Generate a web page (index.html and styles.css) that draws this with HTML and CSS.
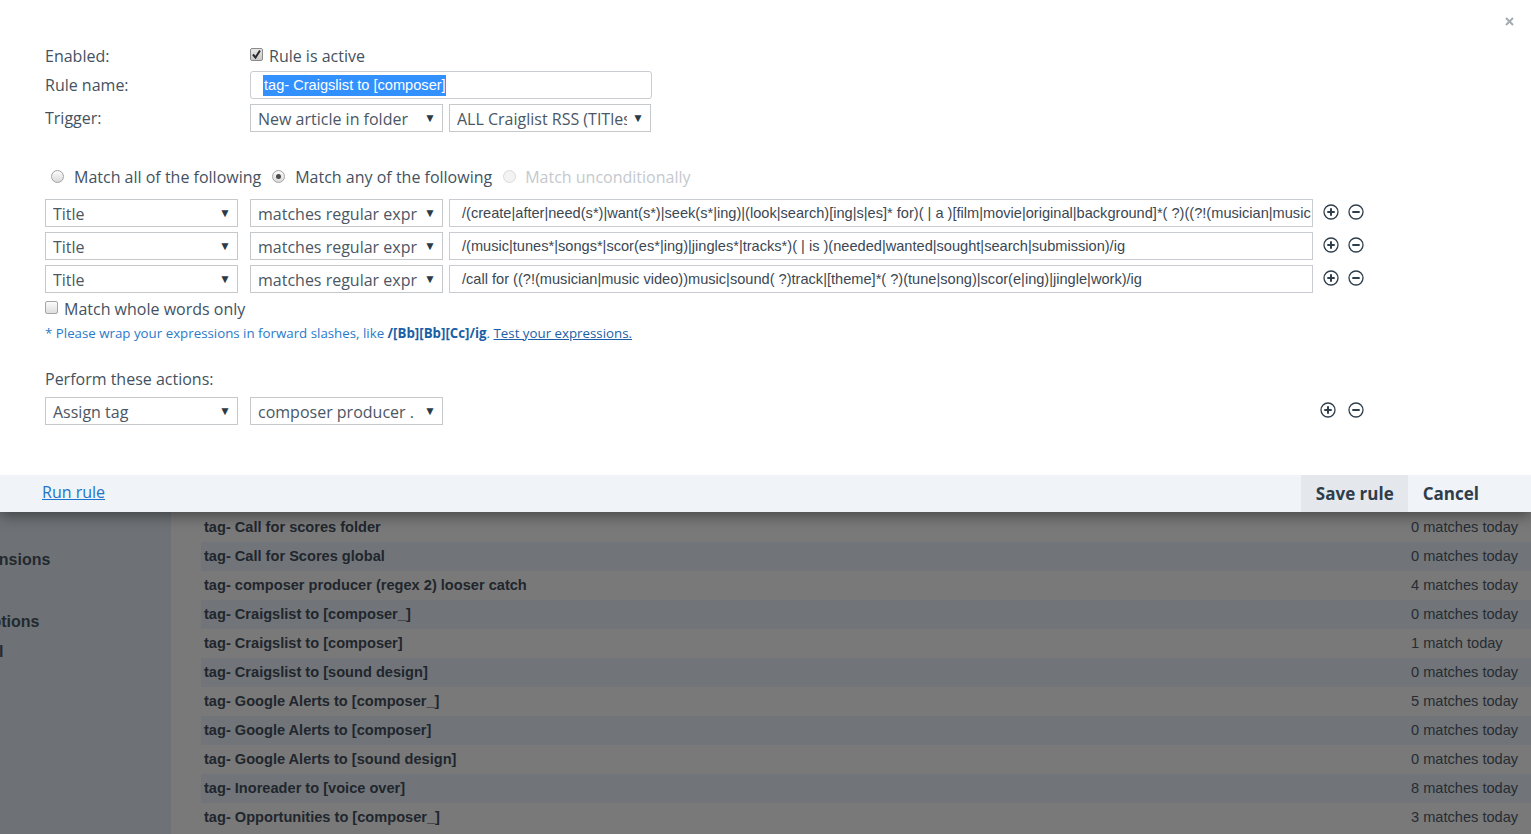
FILE: index.html
```html
<!DOCTYPE html>
<html>
<head>
  <meta charset="utf-8">
  <title>Rules</title>
  <link rel="stylesheet" href="styles.css">
</head>
<body>
  <div class="page">
    <aside class="sidebar">
      <div class="nav nav-ext">Extensions</div>
      <div class="nav nav-opt">Options</div>
      <div class="nav nav-tut">Tutorial</div>
    </aside>
    <main class="rules">
      <div class="rule"><span class="rule-name">tag- Call for scores folder</span><span class="rule-count">0 matches today</span></div>
      <div class="rule"><span class="rule-name">tag- Call for Scores global</span><span class="rule-count">0 matches today</span></div>
      <div class="rule"><span class="rule-name">tag- composer producer (regex 2) looser catch</span><span class="rule-count">4 matches today</span></div>
      <div class="rule"><span class="rule-name">tag- Craigslist to [composer_]</span><span class="rule-count">0 matches today</span></div>
      <div class="rule"><span class="rule-name">tag- Craigslist to [composer]</span><span class="rule-count">1 match today</span></div>
      <div class="rule"><span class="rule-name">tag- Craigslist to [sound design]</span><span class="rule-count">0 matches today</span></div>
      <div class="rule"><span class="rule-name">tag- Google Alerts to [composer_]</span><span class="rule-count">5 matches today</span></div>
      <div class="rule"><span class="rule-name">tag- Google Alerts to [composer]</span><span class="rule-count">0 matches today</span></div>
      <div class="rule"><span class="rule-name">tag- Google Alerts to [sound design]</span><span class="rule-count">0 matches today</span></div>
      <div class="rule"><span class="rule-name">tag- Inoreader to [voice over]</span><span class="rule-count">8 matches today</span></div>
      <div class="rule"><span class="rule-name">tag- Opportunities to [composer_]</span><span class="rule-count">3 matches today</span></div>
    </main>
  </div>

  <div class="modal">
    <span class="close">
      <svg width="9" height="9" viewBox="0 0 9 9"><path d="M1 1L8 8M8 1L1 8" stroke="#a3aab1" stroke-width="2"/></svg>
    </span>
    <div class="modal-body">
      <div class="field-row row-enabled">
        <div class="field-label">Enabled:</div>
        <label class="check-opt"><span class="checkbox checked"><svg width="11" height="11" viewBox="0 0 11 11"><path d="M2 5.5L4.5 8.5L9 1.5" fill="none" stroke="#2b2b2b" stroke-width="2"/></svg></span>Rule is active</label>
      </div>
      <div class="field-row row-name">
        <div class="field-label">Rule name:</div>
        <div class="text-input name-input"><span class="selected">tag- Craigslist to [composer]</span></div>
      </div>
      <div class="field-row">
        <div class="field-label">Trigger:</div>
        <div class="select w193"><span class="select-text">New article in folder</span><span class="arrow">▼</span></div>
        <div class="select w202 ml6"><span class="select-text">ALL Craiglist RSS (TITles only)</span><span class="arrow">▼</span></div>
      </div>

      <div class="match-mode">
        <label class="radio-opt first"><span class="radio"></span>Match all of the following</label>
        <label class="radio-opt"><span class="radio checked"></span>Match any of the following</label>
        <label class="radio-opt disabled"><span class="radio"></span>Match unconditionally</label>
      </div>

      <div class="conditions">
        <div class="cond-row">
          <div class="select w193"><span class="select-text">Title</span><span class="arrow">▼</span></div>
          <div class="select w193 ml12"><span class="select-text">matches regular expr</span><span class="arrow">▼</span></div>
          <div class="text-input regex-input">/(create|after|need(s*)|want(s*)|seek(s*|ing)|(look|search)[ing|s|es]* for)( | a )[film|movie|original|background]*( ?)((?!(musician|music video))music|sound( ?)track|score|composer)/ig</div>
          <span class="icons">
            <svg class="icon" width="16" height="16" viewBox="0 0 16 16"><circle cx="8" cy="8" r="7" fill="none" stroke="#2f3e4c" stroke-width="1.3"/><path d="M8 4.3V11.7M4.3 8H11.7" stroke="#2f3e4c" stroke-width="2"/></svg>
            <svg class="icon" width="16" height="16" viewBox="0 0 16 16"><circle cx="8" cy="8" r="7" fill="none" stroke="#2f3e4c" stroke-width="1.3"/><path d="M4.3 8H11.7" stroke="#2f3e4c" stroke-width="2"/></svg>
          </span>
        </div>
        <div class="cond-row">
          <div class="select w193"><span class="select-text">Title</span><span class="arrow">▼</span></div>
          <div class="select w193 ml12"><span class="select-text">matches regular expr</span><span class="arrow">▼</span></div>
          <div class="text-input regex-input">/(music|tunes*|songs*|scor(es*|ing)|jingles*|tracks*)( | is )(needed|wanted|sought|search|submission)/ig</div>
          <span class="icons">
            <svg class="icon" width="16" height="16" viewBox="0 0 16 16"><circle cx="8" cy="8" r="7" fill="none" stroke="#2f3e4c" stroke-width="1.3"/><path d="M8 4.3V11.7M4.3 8H11.7" stroke="#2f3e4c" stroke-width="2"/></svg>
            <svg class="icon" width="16" height="16" viewBox="0 0 16 16"><circle cx="8" cy="8" r="7" fill="none" stroke="#2f3e4c" stroke-width="1.3"/><path d="M4.3 8H11.7" stroke="#2f3e4c" stroke-width="2"/></svg>
          </span>
        </div>
        <div class="cond-row">
          <div class="select w193"><span class="select-text">Title</span><span class="arrow">▼</span></div>
          <div class="select w193 ml12"><span class="select-text">matches regular expr</span><span class="arrow">▼</span></div>
          <div class="text-input regex-input">/call for ((?!(musician|music video))music|sound( ?)track|[theme]*( ?)(tune|song)|scor(e|ing)|jingle|work)/ig</div>
          <span class="icons">
            <svg class="icon" width="16" height="16" viewBox="0 0 16 16"><circle cx="8" cy="8" r="7" fill="none" stroke="#2f3e4c" stroke-width="1.3"/><path d="M8 4.3V11.7M4.3 8H11.7" stroke="#2f3e4c" stroke-width="2"/></svg>
            <svg class="icon" width="16" height="16" viewBox="0 0 16 16"><circle cx="8" cy="8" r="7" fill="none" stroke="#2f3e4c" stroke-width="1.3"/><path d="M4.3 8H11.7" stroke="#2f3e4c" stroke-width="2"/></svg>
          </span>
        </div>
      </div>

      <label class="check-opt whole-words"><span class="checkbox"></span>Match whole words only</label>
      <p class="hint">* Please wrap your expressions in forward slashes, like <b>/[Bb][Bb][Cc]/ig</b>. <a href="#" class="hint-link">Test your expressions.</a></p>

      <div class="actions-label">Perform these actions:</div>
      <div class="action-row">
        <div class="select w193"><span class="select-text">Assign tag</span><span class="arrow">▼</span></div>
        <div class="select w193 ml12"><span class="select-text">composer producer . .</span><span class="arrow">▼</span></div>
        <span class="spacer"></span>
        <span class="icons action-icons">
          <svg class="icon" width="16" height="16" viewBox="0 0 16 16"><circle cx="8" cy="8" r="7" fill="none" stroke="#2f3e4c" stroke-width="1.3"/><path d="M8 4.3V11.7M4.3 8H11.7" stroke="#2f3e4c" stroke-width="2"/></svg>
          <svg class="icon" width="16" height="16" viewBox="0 0 16 16"><circle cx="8" cy="8" r="7" fill="none" stroke="#2f3e4c" stroke-width="1.3"/><path d="M4.3 8H11.7" stroke="#2f3e4c" stroke-width="2"/></svg>
        </span>
      </div>
    </div>
    <div class="modal-footer">
      <a href="#" class="run-link">Run rule</a>
      <span class="spacer"></span>
      <button class="btn btn-save">Save rule</button>
      <button class="btn btn-cancel">Cancel</button>
    </div>
  </div>
</body>
</html>
```

FILE: styles.css
```css
html {
  font-family: "Open Sans", Arial, sans-serif;
}
body {
  margin: 0;
  background-color: #797979;
  overflow: hidden;
}

/* page behind the dialog */
.page {
  display: flex;
  height: 834px;
}
.sidebar {
  width: 171px;
  flex: none;
  background-color: #6e7276;
  padding-top: 545px;
  overflow: hidden;
  font-family: "Liberation Sans", Arial, sans-serif;
  font-weight: bold;
  font-size: 16px;
  color: #22292f;
}
.nav {
  height: 30px;
  line-height: 30px;
  white-space: nowrap;
}
.nav-ext { margin-left: -35px; }
.nav-opt { margin-left: -21px; margin-top: 32px; }
.nav-tut { margin-left: -54px; }
.rules {
  flex: 1;
  padding-top: 513px;
  padding-left: 30px;
  font-family: "Liberation Sans", Arial, sans-serif;
  font-size: 14.6px;
  color: #1f262d;
}
.rule {
  display: flex;
  justify-content: space-between;
  height: 29px;
  line-height: 29px;
  padding: 0 14px 0 3px;
}
.rule:nth-child(even) {
  background-color: #717579;
}
.rule-name {
  font-weight: bold;
}
.rule-count {
  width: 106px;
  white-space: nowrap;
  color: #262c33;
}

/* dialog */
.modal {
  position: absolute;
  top: 0;
  left: 0;
  right: 0;
  background: #fff;
  box-shadow: 0 3px 14px rgba(0,0,0,.45);
  color: #44525f;
  font-size: 16px;
}
.close {
  position: absolute;
  top: 17px;
  right: 17px;
  line-height: 0;
}
.modal-body {
  height: 475px;
  box-sizing: border-box;
  padding: 42px 0 0 45px;
}
.field-row {
  display: flex;
  align-items: center;
  height: 28px;
  margin-bottom: 5px;
}
.row-enabled { margin-bottom: 1px; }
.field-label {
  width: 205px;
}
.check-opt {
  display: flex;
  align-items: center;
  gap: 6px;
}
.checkbox {
  width: 11px;
  height: 11px;
  border: 1px solid #a6a6a6;
  border-radius: 2px;
  background: linear-gradient(#fbfbfb, #dedede);
  display: flex;
  align-items: center;
  justify-content: center;
  margin-top: -4px;
}
.checkbox.checked {
  border-color: #8a8a8a;
  background: linear-gradient(#e8e8e8, #c9c9c9);
}
.text-input {
  box-sizing: border-box;
  height: 28px;
  border: 1px solid #c9ccd0;
  font-family: "Liberation Sans", Arial, sans-serif;
  font-size: 14.6px;
  line-height: 26px;
  white-space: nowrap;
  overflow: hidden;
  color: #3b4753;
}
.name-input {
  width: 402px;
  border-radius: 3px;
  padding-left: 12px;
}
.selected {
  background-color: #3390ff;
  color: #fff;
  padding: 2px 0 3px 1px;
}
.select {
  box-sizing: border-box;
  height: 28px;
  border: 1px solid #c6c9cc;
  display: flex;
  align-items: center;
  padding: 1px 6px 0 7px;
  color: #4b5764;
  white-space: nowrap;
}
.select-text {
  flex: 1;
  min-width: 0;
  overflow: hidden;
  text-overflow: clip;
}
.arrow {
  font-size: 12px;
  color: #2c3a47;
  margin-left: 5px;
  margin-top: -2px;
}
.w193 { width: 193px; }
.w202 { width: 202px; }
.ml6 { margin-left: 6px; }
.ml12 { margin-left: 12px; }

.match-mode {
  display: flex;
  align-items: center;
  height: 20px;
  margin-top: 35px;
}
.radio-opt {
  display: flex;
  align-items: center;
  gap: 10px;
  margin-right: 11px;
}
.radio-opt.first { margin-left: 6px; }
.radio-opt.disabled {
  color: #c4c9ce;
  gap: 9px;
}
.radio {
  width: 11px;
  height: 11px;
  border: 1px solid #a3a3a3;
  border-radius: 50%;
  background: linear-gradient(#fbfbfb, #dadada);
  display: flex;
  align-items: center;
  justify-content: center;
  margin-top: -1px;
}
.radio.checked::after {
  content: "";
  width: 5px;
  height: 5px;
  border-radius: 50%;
  background: #4a4a4a;
}
.disabled .radio {
  border-color: #dadada;
  background: #f3f3f3;
}

.conditions {
  margin-top: 12px;
}
.cond-row {
  display: flex;
  align-items: center;
  height: 28px;
  margin-bottom: 5px;
}
.regex-input {
  width: 864px;
  margin-left: 6px;
  padding-left: 12px;
  padding-right: 3px;
}
.icons {
  display: flex;
  gap: 9px;
  margin-left: 10px;
  margin-top: -3px;
}
.icon { display: block; }

.whole-words {
  height: 20px;
  margin-top: 6px;
  gap: 6px;
}
.whole-words .checkbox {
  margin-top: -4px;
}
.hint {
  margin: 5px 0 0;
  line-height: 18px;
  font-size: 13.3px;
  color: #2a7acb;
}
.hint b {
  color: #1b5fa6;
}
.hint-link {
  color: #1b5fa6;
}
.actions-label {
  margin-top: 26px;
  line-height: 22px;
}
.action-row {
  display: flex;
  align-items: center;
  width: 1319px;
  margin-top: 7px;
}
.spacer { flex: 1; }
.action-icons {
  gap: 12px;
  margin-top: -2px;
}

.modal-footer {
  display: flex;
  align-items: center;
  height: 37px;
  background-color: #f0f3f7;
}
.run-link {
  margin-left: 42px;
  margin-top: -3px;
  color: #1f73c8;
  font-size: 16px;
}
.btn {
  height: 37px;
  border: none;
  font-family: "Open Sans", Arial, sans-serif;
  font-weight: bold;
  font-size: 17px;
  color: #2e3d4b;
  background: transparent;
  padding: 0 14px 0 15px;
}
.btn-save {
  background-color: #e4e8ec;
}
.btn-cancel {
  padding: 0 52px 0 15px;
}
```
